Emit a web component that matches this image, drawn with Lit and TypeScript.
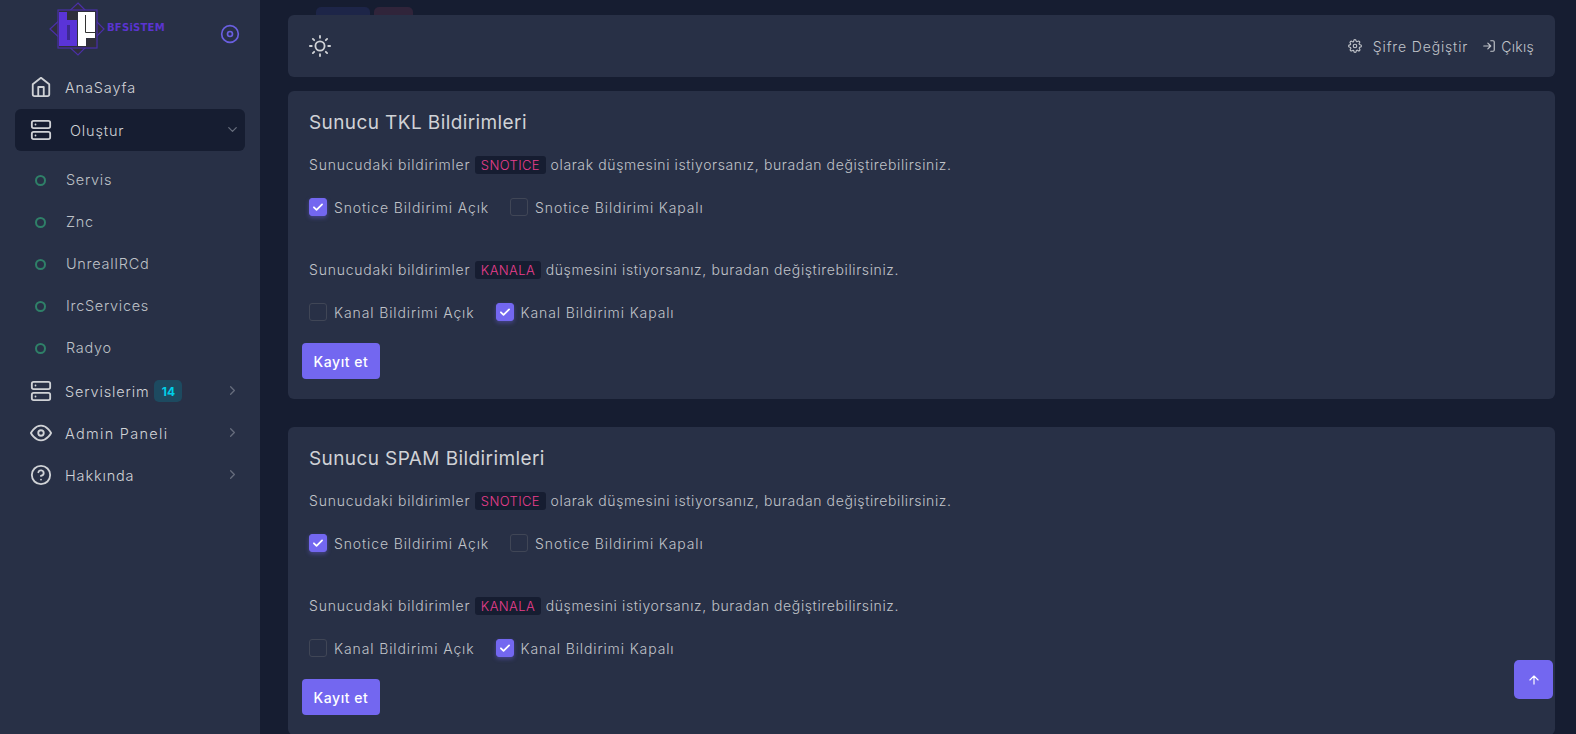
import { LitElement, html, css, svg } from "lit";
import { customElement } from "lit/decorators.js";

const ic = (body: unknown, size = 22, sw = 2) => html`<svg width=${size} height=${size} viewBox="0 0 24 24" fill="none" stroke="currentColor" stroke-width=${sw} stroke-linecap="round" stroke-linejoin="round">${body}</svg>`;
const home = svg`<path d="M3 9l9-7 9 7v11a2 2 0 0 1-2 2H5a2 2 0 0 1-2-2z"/><path d="M9 22V12h6v10"/>`;
const server = svg`<rect x="2" y="2" width="20" height="8" rx="2"/><rect x="2" y="14" width="20" height="8" rx="2"/><path d="M6 6h.01M6 18h.01"/>`;
const eye = svg`<path d="M1 12s4-8 11-8 11 8 11 8-4 8-11 8-11-8-11-8z"/><circle cx="12" cy="12" r="3"/>`;
const help = svg`<circle cx="12" cy="12" r="10"/><path d="M9.09 9a3 3 0 0 1 5.83 1c0 2-3 3-3 3M12 17h.01"/>`;
const right = svg`<path d="M9 18l6-6-6-6"/>`;
const down = svg`<path d="M6 9l6 6 6-6"/>`;
const sun = svg`<circle cx="12" cy="12" r="5"/><path d="M12 1v2M12 21v2M4.22 4.22l1.42 1.42M18.36 18.36l1.42 1.42M1 12h2M21 12h2M4.22 19.78l1.42-1.42M18.36 5.64l1.42-1.42"/>`;
const gear = svg`<circle cx="12" cy="12" r="3"/><path d="M19.4 15a1.65 1.65 0 0 0 .33 1.82l.06.06a2 2 0 1 1-2.83 2.83l-.06-.06a1.65 1.65 0 0 0-2.82 1.17V21a2 2 0 1 1-4 0v-.09a1.65 1.65 0 0 0-2.82-1.08l-.06.06a2 2 0 1 1-2.83-2.83l.06-.06a1.65 1.65 0 0 0-1.17-2.82H3a2 2 0 1 1 0-4h.09a1.65 1.65 0 0 0 1.08-2.82l-.06-.06a2 2 0 1 1 2.83-2.83l.06.06a1.65 1.65 0 0 0 2.82-1.17V3a2 2 0 1 1 4 0v.09a1.65 1.65 0 0 0 2.82 1.08l.06-.06a2 2 0 1 1 2.83 2.83l-.06.06a1.65 1.65 0 0 0 1.17 2.82H21a2 2 0 1 1 0 4h-.09a1.65 1.65 0 0 0-1.51 1z"/>`;
const login = svg`<path d="M15 3h4a2 2 0 0 1 2 2v14a2 2 0 0 1-2 2h-4"/><path d="M10 17l5-5-5-5M15 12H3"/>`;
const up = svg`<path d="M12 19V5M5 12l7-7 7 7"/>`;
const check = svg`<path d="M5 12.5l4.5 4.5L19 7.5"/>`;

@customElement("app-root")
export class AppRoot extends LitElement {
  static styles = css`
    :host { display: block; width: 1576px; height: 734px; overflow: hidden; background: #161d31; color: #b4b7bd; font-family: "Inter", "Liberation Sans", sans-serif; font-size: 14px; font-weight: 300; position: relative; }
    * { box-sizing: border-box; }
    .layout { display: flex; height: 734px; }
    .side { width: 260px; flex: none; height: 100%; background: #283046; padding: 0 15px; }
    .brand { height: 66px; display: flex; align-items: flex-start; padding: 2px 0 0 34px; position: relative; }
    .brand svg { flex: none; }
    .brand-text { margin: 20px 0 0 2px; color: #5a34d0; font: 700 10px "DejaVu Sans", sans-serif; letter-spacing: 0.25px; white-space: nowrap; }
    .toggle { position: absolute; left: 205px; top: 24px; color: #6a5fe0; display: flex; }
    .nav { display: flex; flex-direction: column; }
    .item { height: 42px; display: flex; align-items: center; padding-left: 15px; color: #d0d2d6; letter-spacing: .85px; font-size: 14.5px; position: relative; }
    .item .t { margin-left: 13px; }
    .item .t.wide { letter-spacing: 1.3px; }
    .item.first { margin-bottom: 1px; }
    .item.active { background: #161d31; border-radius: 6px; margin-bottom: 7px; }
    .item.active .t { margin-left: 18px; }
    .item .arrow { position: absolute; right: 5px; top: 13px; color: #676d7d; display: flex; }
    .sub { padding-left: 20px; color: #bec1c7; letter-spacing: .7px; }
    .sub:nth-child(7) { margin-bottom: 2px; }
    .sub .dot { width: 11px; height: 11px; border: 2px solid #2f8068; border-radius: 50%; margin-right: 20px; flex: none; position: relative; top: 1px; }
    .badge { margin-left: 5px; width: 28px; height: 22px; border-radius: 5px; background: #1d4a60; color: #00cfe8; font-size: 12px; font-weight: 700; display: flex; align-items: center; justify-content: center; letter-spacing: 0; }
    .main { flex: 1; min-width: 0; padding: 0 21px 0 28px; position: relative; }
    .peek { height: 15px; padding: 7px 0 0 28px; display: flex; gap: 4px; overflow: hidden; }
    .peek i { display: block; height: 20px; border-radius: 5px; }
    .peek .a { width: 54px; background: #1d2548; }
    .peek .b { width: 39px; background: #30243a; }
    .card { background: #283046; border-radius: 6px; }
    .top { height: 62px; display: flex; align-items: center; padding: 0 21px; margin-bottom: 14px; }
    .sun { color: #d0d2d6; display: flex; }
    .links { margin-left: auto; display: flex; align-items: center; color: #c0c3c9; letter-spacing: .85px; font-size: 14px; }
    .links svg { display: block; }
    .links span { margin-left: 11px; }
    .links span.c { margin-left: 5px; letter-spacing: .3px; }
    .links .l2 { margin-left: 14px; display: flex; }
    .panel { padding: 0 21px 20px; height: 308px; margin-bottom: 28px; display: flex; flex-direction: column; align-items: flex-start; }
    h4 { margin: 0; padding-top: 20px; height: 52px; font-size: 19px; font-weight: 400; color: #d0d2d6; letter-spacing: .4px; line-height: 24px; }
    p { margin: 11px 0 0; height: 22px; line-height: 22px; letter-spacing: .62px; color: #c0c3c9; font-size: 14px; }
    p .lead { letter-spacing: .78px; }
    p.second { margin-top: 43px; }
    code { background: #161d31; color: #e83e8c; padding: 1px 6px; border-radius: 3px; font-size: 13px; font-family: inherit; letter-spacing: .4px; }
    .row { display: flex; margin-top: 22px; height: 18px; align-items: center; }
    .opt { display: flex; align-items: center; margin-right: 21px; letter-spacing: .88px; color: #c0c3c9; }
    .box { width: 18px; height: 18px; border-radius: 3px; border: 1px solid #404656; margin-right: 7px; display: flex; align-items: center; justify-content: center; color: #fff; flex: none; }
    .box.on { background: #7367f0; border-color: #7367f0; box-shadow: 0 2px 4px 0 rgba(115,103,240,.4); }
    .btn { margin: 22px 0 0 -7px; width: 78px; height: 36px; border-radius: 4px; background: #7367f0; color: #fff; font-weight: 500; font-size: 14px; display: flex; align-items: center; justify-content: center; letter-spacing: .55px; }
    .totop { position: absolute; left: 1514px; top: 660px; width: 39px; height: 39px; border-radius: 5px; background: #7367f0; color: #fff; display: flex; align-items: center; justify-content: center; }
  `;

  private sub(t: string) { return html`<div class="item sub"><span class="dot"></span>${t}</div>`; }

  private opt(t: string, on: boolean) {
    return html`<div class="opt"><span class="box ${on ? "on" : ""}">${on ? ic(check, 14, 3) : ""}</span>${t}</div>`;
  }

  private panel(title: string) {
    return html`<section class="card panel">
      <h4>${title}</h4>
      <p><span class="lead">Sunucudaki bildirimler</span> <code>SNOTICE</code> olarak düşmesini istiyorsanız, buradan değiştirebilirsiniz.</p>
      <div class="row">${this.opt("Snotice Bildirimi Açık", true)}${this.opt("Snotice Bildirimi Kapalı", false)}</div>
      <p class="second"><span class="lead">Sunucudaki bildirimler</span> <code>KANALA</code> düşmesini istiyorsanız, buradan değiştirebilirsiniz.</p>
      <div class="row">${this.opt("Kanal Bildirimi Açık", false)}${this.opt("Kanal Bildirimi Kapalı", true)}</div>
      <div class="btn">Kayıt et</div>
    </section>`;
  }

  render() {
    return html`<div class="layout">
      <aside class="side">
        <div class="brand">
          <svg width="56" height="54" viewBox="0 0 56 54">
            <path d="M29 1 L55 27 L29 53 L1 27 Z" fill="#2f2f3b" stroke="#4a2fa8" stroke-width="1.2"/>
            <rect x="9" y="8" width="39" height="38" fill="#2f2f3b" stroke="#4a2fa8" stroke-width="1.2"/>
            <path d="M10 10 H18 V18 H28 V44 H10 Z" fill="#5a34d8"/>
            <path d="M18 23 H21 V38 H18 Z" fill="#3d2a90"/>
            <path d="M29 10 H46 V36 H37 V44 H29 Z" fill="#fff"/>
            <path d="M36.5 13 V30.5 H46" fill="none" stroke="#333" stroke-width="1"/>
          </svg>
          <span class="brand-text">BFSiSTEM</span>
          <span class="toggle">${ic(svg`<circle cx="12" cy="12" r="10"/><circle cx="12" cy="12" r="3"/>`, 20)}</span>
        </div>
        <nav class="nav">
          <div class="item first">${ic(home)}<span class="t">AnaSayfa</span></div>
          <div class="item active">${ic(server)}<span class="t">Oluştur</span><span class="arrow">${ic(down, 15)}</span></div>
          ${["Servis", "Znc", "UnrealIRCd", "IrcServices", "Radyo"].map((t) => this.sub(t))}
          <div class="item">${ic(server)}<span class="t">Servislerim</span><span class="badge">14</span><span class="arrow">${ic(right, 15)}</span></div>
          <div class="item">${ic(eye)}<span class="t wide">Admin Paneli</span><span class="arrow">${ic(right, 15)}</span></div>
          <div class="item">${ic(help)}<span class="t">Hakkında</span><span class="arrow">${ic(right, 15)}</span></div>
        </nav>
      </aside>
      <main class="main">
        <div class="peek"><i class="a"></i><i class="b"></i></div>
        <header class="card top">
          <span class="sun">${ic(sun, 22, 2)}</span>
          <div class="links">${ic(gear, 14)}<span>Şifre Değiştir</span><span class="l2">${ic(login, 14)}</span><span class="c">Çıkış</span></div>
        </header>
        ${this.panel("Sunucu TKL Bildirimleri")}
        ${this.panel("Sunucu SPAM Bildirimleri")}
      </main>
    </div>
    <div class="totop">${ic(up, 14, 2)}</div>`;
  }
}
